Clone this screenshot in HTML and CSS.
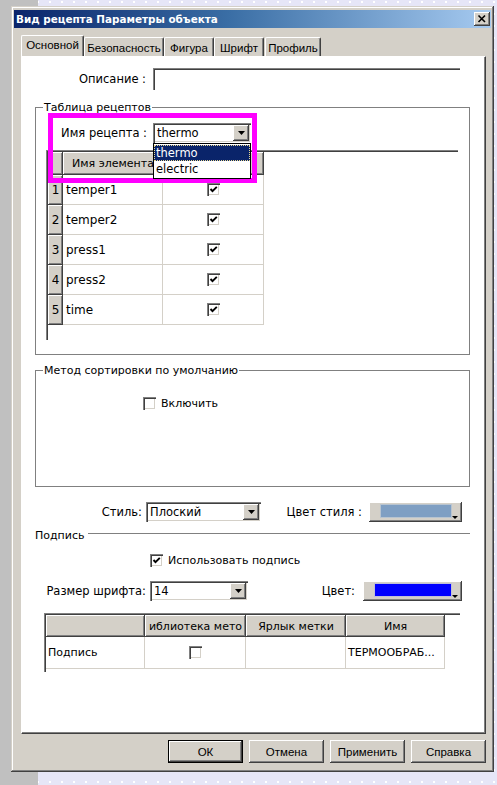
FILE: index.html
```html
<!DOCTYPE html>
<html lang="ru">
<head>
<meta charset="utf-8">
<title>Вид рецепта Параметры объекта</title>
<link rel="stylesheet" href="styles.css">
</head>
<body>
<div class="dialog">
  <div class="titlebar">
    <span class="title">Вид рецепта Параметры объекта</span>
    <span class="close-btn"><svg width="16" height="14" viewBox="0 0 16 14"><path d="M4.5 3.5 L11 10 M11 3.5 L4.5 10" stroke="#000" stroke-width="1.6" fill="none"/></svg></span>
  </div>
  <div class="tabs">
    <div class="tab tab-active tab-main">Основной</div>
    <div class="tab tab-sec">Безопасность</div>
    <div class="tab tab-fig">Фигура</div>
    <div class="tab tab-font">Шрифт</div>
    <div class="tab tab-prof">Профиль</div>
  </div>
  <div class="panel">
    <div class="row row-desc">
      <span class="lbl lbl-desc">Описание :</span>
      <span class="field field-desc"></span>
    </div>

    <fieldset class="group group-recipes">
      <legend>Таблица рецептов</legend>
      <div class="row row-recipe">
        <span class="lbl lbl-recipe">Имя рецепта :</span>
        <div class="combo combo-recipe">
          <span class="combo-text">thermo</span>
          <span class="combo-btn"><svg width="7" height="4" viewBox="0 0 7 4"><polygon points="0,0 7,0 3.5,4" fill="#000"/></svg></span>
          <div class="dropdown">
            <div class="opt opt-sel">thermo</div>
            <div class="opt">electric</div>
          </div>
        </div>
        <div class="highlight"></div>
      </div>
      <div class="grid grid-elements">
        <div class="gh"></div>
        <div class="gh">Имя элемента</div>
        <div class="gh"></div>
        <div class="rh">1</div><div class="gc">temper1</div><div class="gc gc-center"><span class="chk"><svg width="9" height="9" viewBox="0 0 9 9"><polyline points="1.5,4 3.5,6.2 7.8,1.8" fill="none" stroke="#000" stroke-width="1.9"/></svg></span></div>
        <div class="rh">2</div><div class="gc">temper2</div><div class="gc gc-center"><span class="chk"><svg width="9" height="9" viewBox="0 0 9 9"><polyline points="1.5,4 3.5,6.2 7.8,1.8" fill="none" stroke="#000" stroke-width="1.9"/></svg></span></div>
        <div class="rh">3</div><div class="gc">press1</div><div class="gc gc-center"><span class="chk"><svg width="9" height="9" viewBox="0 0 9 9"><polyline points="1.5,4 3.5,6.2 7.8,1.8" fill="none" stroke="#000" stroke-width="1.9"/></svg></span></div>
        <div class="rh">4</div><div class="gc">press2</div><div class="gc gc-center"><span class="chk"><svg width="9" height="9" viewBox="0 0 9 9"><polyline points="1.5,4 3.5,6.2 7.8,1.8" fill="none" stroke="#000" stroke-width="1.9"/></svg></span></div>
        <div class="rh">5</div><div class="gc">time</div><div class="gc gc-center"><span class="chk"><svg width="9" height="9" viewBox="0 0 9 9"><polyline points="1.5,4 3.5,6.2 7.8,1.8" fill="none" stroke="#000" stroke-width="1.9"/></svg></span></div>
      </div>
    </fieldset>

    <fieldset class="group group-sort">
      <legend>Метод сортировки по умолчанию</legend>
      <div class="check-row check-sort">
        <span class="chk"></span><span class="check-label">Включить</span>
      </div>
    </fieldset>

    <div class="row row-style">
      <span class="lbl lbl-style">Стиль:</span>
      <div class="combo combo-style">
        <span class="combo-text">Плоский</span>
        <span class="combo-btn"><svg width="7" height="4" viewBox="0 0 7 4"><polygon points="0,0 7,0 3.5,4" fill="#000"/></svg></span>
      </div>
      <span class="lbl lbl-stylecolor">Цвет стиля :</span>
      <div class="colorbtn colorbtn-style">
        <span class="swatch swatch-style"></span>
        <span class="mini-arrow"></span>
      </div>
    </div>

    <div class="sep-row">
      <span class="sep-label">Подпись</span>
      <span class="sep-line"></span>
    </div>

    <div class="check-row check-caption">
      <span class="chk"><svg width="9" height="9" viewBox="0 0 9 9"><polyline points="1.5,4 3.5,6.2 7.8,1.8" fill="none" stroke="#000" stroke-width="1.9"/></svg></span><span class="check-label">Использовать подпись</span>
    </div>

    <div class="row row-font">
      <span class="lbl lbl-font">Размер шрифта:</span>
      <div class="combo combo-font">
        <span class="combo-text">14</span>
        <span class="combo-btn"><svg width="7" height="4" viewBox="0 0 7 4"><polygon points="0,0 7,0 3.5,4" fill="#000"/></svg></span>
      </div>
      <span class="lbl lbl-color">Цвет:</span>
      <div class="colorbtn colorbtn-text">
        <span class="swatch swatch-blue"></span>
        <span class="mini-arrow"></span>
      </div>
    </div>

    <div class="grid grid-caption">
      <div class="gh"></div>
      <div class="gh">иблиотека мето</div>
      <div class="gh">Ярлык метки</div>
      <div class="gh">Имя</div>
      <div class="gc">Подпись</div>
      <div class="gc gc-center"><span class="chk"></span></div>
      <div class="gc"></div>
      <div class="gc">ТЕРМООБРАБ...</div>
    </div>
  </div>

  <div class="buttons">
    <div class="btn btn-default">ОК</div>
    <div class="btn">Отмена</div>
    <div class="btn">Применить</div>
    <div class="btn">Справка</div>
  </div>
</div>
</body>
</html>
```

FILE: styles.css
```css
* { box-sizing: border-box; }

html, body { margin: 0; padding: 0; }

body {
  width: 497px;
  height: 785px;
  overflow: hidden;
  padding: 6px 0 0 11px;
  font-family: "DejaVu Sans", "Liberation Sans", sans-serif;
  font-size: 11px;
  color: #000;
  background:
    linear-gradient(to right, #c0c0c0 0, #c0c0c0 38px, transparent 38px),
    radial-gradient(circle at 2px 2px, #ffffff 0, #ffffff 0.8px, transparent 1.3px) 0 0 / 12px 12px,
    #e6e6f7;
}

/* ---------- window ---------- */
.dialog {
  width: 483px;
  height: 766px;
  background: #d4d0c8;
  padding: 4px 3px 3px 3px;
  display: flex;
  flex-direction: column;
  box-shadow:
    inset -1px -1px #404040,
    inset 1px 1px #d4d0c8,
    inset -2px -2px #808080,
    inset 2px 2px #ffffff;
}

.titlebar {
  height: 18px;
  display: flex;
  align-items: center;
  justify-content: space-between;
  padding: 0 1px 0 2px;
  background: linear-gradient(to right, #0a246a 0%, #3a6ea5 45%, #a6caf0 100%);
}

.title {
  color: #fff;
  font-weight: bold;
  font-size: 10.4px;
}

.close-btn {
  width: 16px;
  height: 14px;
  background: #d4d0c8;
  display: flex;
  box-shadow:
    inset -1px -1px #404040,
    inset 1px 1px #ffffff,
    inset -2px -2px #808080;
}

/* ---------- tabs ---------- */
.tabs {
  margin: 7px 0 0 7px;
  height: 21px;
  display: flex;
  align-items: flex-end;
  font-family: "Liberation Sans", "DejaVu Sans", sans-serif;
  font-size: 11.5px;
}

.tab {
  height: 19px;
  display: flex;
  align-items: center;
  justify-content: center;
  background: #d4d0c8;
  border-top: 1px solid #ffffff;
  border-left: 1px solid #ffffff;
  border-right: 1px solid #404040;
  border-radius: 2px 2px 0 0;
  box-shadow: inset -1px 0 #808080;
  padding-top: 1px;
  white-space: nowrap;
}

.tab-active {
  height: 21px;
  padding-top: 0;
  padding-bottom: 2px;
}

.tab-main { width: 63px; }
.tab-sec  { width: 80px; }
.tab-fig  { width: 50px; }
.tab-font { width: 50px; }
.tab-prof { width: 56px; margin-left: 1px; }

/* ---------- panel ---------- */
.panel {
  margin-left: 7px;
  width: 465px;
  height: 678px;
  background: #ffffff;
  border-top: 1px solid #ffffff;
  border-left: 1px solid #ffffff;
  border-right: 1px solid #404040;
  border-bottom: 1px solid #404040;
  box-shadow: inset -1px -1px #808080;
  display: flex;
  flex-direction: column;
}

.row {
  display: flex;
  align-items: center;
}

.lbl {
  text-align: right;
  white-space: nowrap;
  font-size: 11.5px;
}

.row-desc {
  margin-top: 11px;
  height: 22px;
}
.lbl-desc { width: 124px; margin-right: 7px; }

.field-desc {
  width: 307px;
  height: 22px;
  background: #fff;
  box-shadow:
    inset 1px 1px #808080,
    inset 2px 2px #404040;
}

/* ---------- group boxes ---------- */
.group {
  margin: 0 0 0 13px;
  padding: 0;
  width: 435px;
  min-width: 0;
  border: 1px solid #808080;
}

.group legend {
  margin-left: 7px;
  padding: 0 1px;
  line-height: 13px;
  font-size: 11px;
}

.group-recipes {
  margin-top: 11px;
  height: 254px;
}

.group-sort {
  margin-top: 9px;
  height: 123px;
}

.row-recipe {
  position: relative;
  margin-top: 9px;
  height: 20px;
}
.lbl-recipe { width: 111px; margin-right: 6px; }

/* ---------- combo boxes ---------- */
.combo {
  position: relative;
  height: 20px;
  background: #fff;
  display: flex;
  align-items: center;
  padding: 2px;
  box-shadow:
    inset 1px 1px #808080,
    inset 2px 2px #404040,
    inset -1px -1px #ffffff,
    inset -2px -2px #d4d0c8;
}

.combo-text {
  flex: 1;
  padding-left: 2px;
  white-space: nowrap;
  font-size: 11.5px;
}

.combo-btn {
  width: 16px;
  height: 16px;
  background: #d4d0c8;
  display: flex;
  align-items: center;
  justify-content: center;
  box-shadow:
    inset -1px -1px #404040,
    inset 1px 1px #ffffff,
    inset -2px -2px #808080;
}

.combo-recipe { width: 98px; }
.combo-style  { width: 115px; }
.combo-font   { width: 98px; }

.dropdown {
  position: absolute;
  z-index: 3;
  top: 100%;
  left: 0;
  width: 98px;
  background: #fff;
  border: 1px solid #000;
  padding: 1px 0;
  font-size: 11.5px;
}

.opt {
  height: 16px;
  line-height: 16px;
  padding-left: 2px;
}

.opt-sel {
  background: #0a246a;
  color: #fff;
  outline: 1px dotted #e8d890;
  outline-offset: -1px;
}

.highlight {
  position: absolute;
  z-index: 2;
  left: 12px;
  top: -10px;
  width: 209px;
  height: 70px;
  border: 5px solid #ff00ff;
  pointer-events: none;
}

/* ---------- grids ---------- */
.grid {
  display: grid;
  background: #fff;
  border-top: 1px solid #808080;
  border-left: 1px solid #808080;
  box-shadow: inset 1px 1px #404040;
  padding: 1px 0 0 1px;
  align-content: start;
}

.grid-elements {
  margin: 7px 0 0 10px;
  width: 412px;
  height: 190px;
  grid-template-columns: 15px 100px 101px;
  grid-template-rows: 23px repeat(5, 30px);
}

.gh {
  background: #d4d0c8;
  display: flex;
  align-items: center;
  justify-content: center;
  white-space: nowrap;
  overflow: hidden;
  box-shadow:
    inset -1px -1px #404040,
    inset 1px 1px #ffffff,
    inset -2px -2px #808080;
}

.rh {
  background: #d4d0c8;
  display: flex;
  align-items: center;
  justify-content: center;
  font-size: 12px;
  box-shadow:
    inset -1px -1px #404040,
    inset 1px 1px #ffffff,
    inset -2px -2px #808080;
}

.gc {
  display: flex;
  align-items: center;
  padding-left: 3px;
  border-right: 1px solid #d4d0c8;
  border-bottom: 1px solid #d4d0c8;
  white-space: nowrap;
  overflow: hidden;
  font-size: 12px;
}

.gc-center {
  justify-content: center;
  padding-left: 0;
}

.grid-caption {
  margin: 12px 0 0 22px;
  width: 416px;
  height: 59px;
  grid-template-columns: 99px 101px 100px 99px;
  grid-template-rows: 22px 32px;
}

.grid-caption .gc { font-size: 11px; padding-left: 2px; }
.grid-caption .gc-center { padding-left: 0; }

/* ---------- checkboxes ---------- */
.chk {
  width: 13px;
  height: 13px;
  flex: none;
  background: #fff;
  display: flex;
  align-items: center;
  justify-content: center;
  box-shadow:
    inset 1px 1px #808080,
    inset 2px 2px #404040,
    inset -1px -1px #ffffff,
    inset -2px -2px #d4d0c8;
}

.check-row {
  display: flex;
  align-items: center;
  height: 13px;
}

.check-label { margin-left: 5px; }

.check-sort {
  margin: 20px 0 0 107px;
}

.check-caption {
  margin: 12px 0 0 128px;
}

/* ---------- style row ---------- */
.row-style {
  margin-top: 15px;
  height: 20px;
}
.lbl-style { width: 120px; margin-right: 4px; }
.lbl-stylecolor { width: 101px; margin-right: 7px; }

.colorbtn {
  position: relative;
  height: 20px;
  background: #d4d0c8;
  padding: 2px 10px 4px 11px;
  display: flex;
  box-shadow:
    inset -1px -1px #404040,
    inset 1px 1px #ffffff,
    inset -2px -2px #808080;
}

.colorbtn-style { width: 93px; }
.colorbtn-text  { width: 99px; }

.swatch {
  flex: 1;
  border: 1px solid #b8c4d0;
}
.swatch-style { background: #7f9fc3; }
.swatch-blue  { background: #0000ff; border-color: #c0c0d8; }

.mini-arrow {
  position: absolute;
  right: 4px;
  bottom: 3px;
  width: 0;
  height: 0;
  border-left: 3px solid transparent;
  border-right: 3px solid transparent;
  border-top: 3px solid #000;
}

/* ---------- separator ---------- */
.sep-row {
  margin: 7px 0 0 13px;
  width: 435px;
  height: 13px;
  display: flex;
  align-items: flex-start;
}

.sep-label {
  line-height: 13px;
  white-space: nowrap;
}

.sep-line {
  flex: 1;
  margin: 4px 0 0 4px;
  height: 2px;
  border-top: 1px solid #808080;
  border-bottom: 1px solid #ffffff;
}

/* ---------- font row ---------- */
.row-font {
  margin-top: 14px;
  height: 20px;
}
.lbl-font { width: 124px; margin-right: 4px; }
.lbl-color { width: 107px; margin-right: 8px; }

/* ---------- buttons ---------- */
.buttons {
  margin-top: 6px;
  display: flex;
  justify-content: flex-end;
  gap: 6px;
  padding-right: 5px;
  font-family: "Liberation Sans", "DejaVu Sans", sans-serif;
  font-size: 11.5px;
}

.btn {
  width: 75px;
  height: 23px;
  background: #d4d0c8;
  display: flex;
  align-items: center;
  justify-content: center;
  box-shadow:
    inset -1px -1px #404040,
    inset 1px 1px #ffffff,
    inset -2px -2px #808080;
}

.btn-default {
  border: 1px solid #000;
}
```
